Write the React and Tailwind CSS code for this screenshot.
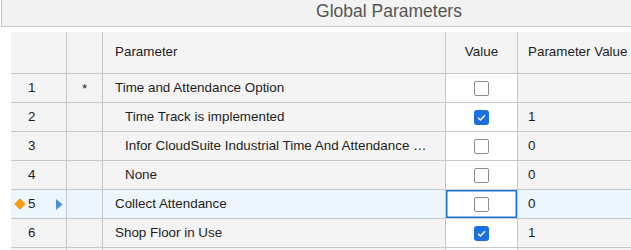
const rows = [
  { n: 1, mark: "*", name: "Time and Attendance Option", checked: false, value: "" },
  { n: 2, name: "Time Track is implemented", indent: true, checked: true, value: "1" },
  { n: 3, name: "Infor CloudSuite Industrial Time And Attendance …", indent: true, checked: false, value: "0" },
  { n: 4, name: "None", indent: true, checked: false, value: "0" },
  { n: 5, name: "Collect Attendance", checked: false, value: "0", current: true },
  { n: 6, name: "Shop Floor in Use", checked: true, value: "1" },
  { n: 7, name: "", checked: false, value: "", blank: true },
];

const Checkbox = ({ checked }) =>
  checked ? (
    <span className="flex h-[15px] w-[15px] items-center justify-center rounded-[3px] bg-[#1a6fe3]">
      <svg width="11" height="11" viewBox="0 0 11 11">
        <path d="M2 5.8 L4.4 8 L9 3.2" fill="none" stroke="#fff" strokeWidth="1.4" />
      </svg>
    </span>
  ) : (
    <span className="h-[15px] w-[15px] rounded-[2px] border border-[#8c8c8c] bg-white" />
  );

const cols = "grid grid-cols-[55px_36px_343px_72px_1fr]";

export default function App() {
  return (
    <div className="h-[250px] w-[631px] overflow-hidden bg-white font-['Liberation_Sans',Arial,sans-serif] text-[13.4px] text-[#1e1e1e]">
      <div className="w-[776px]">
        {/* title bar */}
        <div className="ml-px flex h-[27px] items-center justify-center border-b border-l border-[#c6c6c6] bg-[#f3f3f3] pb-[4px] text-[17.5px] text-[#555]">
          Global Parameters
        </div>

        <div className="pl-[11px] pt-[5px]">
          {/* header */}
          <div className={`${cols} h-[42px] border-b border-[#c8c8c8] bg-[#f4f4f4]`}>
            <div />
            <div className="border-l border-[#c8c8c8]" />
            <div className="flex items-center border-l border-[#c8c8c8] pl-[12px]">Parameter</div>
            <div className="flex items-center justify-center border-l border-[#c8c8c8]">Value</div>
            <div className="flex items-center border-l border-[#c8c8c8] pl-[10px] whitespace-nowrap">
              Parameter Value
            </div>
          </div>

          {rows.map((r) => (
            <div
              key={r.n}
              className={`${cols} h-[29px] border-b border-[#c8c8c8] ${r.current ? "bg-[#edf5fd]" : "bg-[#f4f4f4]"}`}
            >
              <div className="relative flex items-center pl-[17px]">
                {r.current && (
                  <span className="absolute left-[5px] top-[10px] h-[8px] w-[8px] rotate-45 bg-[#f59b0c]" />
                )}
                {!r.blank && r.n}
                {r.current && (
                  <svg className="absolute left-[45px] top-[9px]" width="7" height="11" viewBox="0 0 7 11">
                    <path d="M0 0 L6.5 5.5 L0 11 Z" fill="#4a8fe0" />
                  </svg>
                )}
              </div>
              <div className="flex items-center justify-center border-l border-[#c8c8c8] pt-[2px]">{r.mark}</div>
              <div
                className={`flex items-center overflow-hidden whitespace-nowrap border-l border-[#c8c8c8] ${r.indent ? "pl-[22px]" : "pl-[12px]"}`}
              >
                {r.name}
              </div>
              <div
                className={`flex items-center justify-center border-l border-[#c8c8c8] bg-white ${r.current ? "shadow-[inset_0_0_0_1.5px_#1f74e0]" : ""}`}
              >
                {!r.blank && <Checkbox checked={r.checked} />}
              </div>
              <div className="flex items-center border-l border-[#c8c8c8] pl-[10px]">{r.value}</div>
            </div>
          ))}
        </div>
      </div>
    </div>
  );
}
